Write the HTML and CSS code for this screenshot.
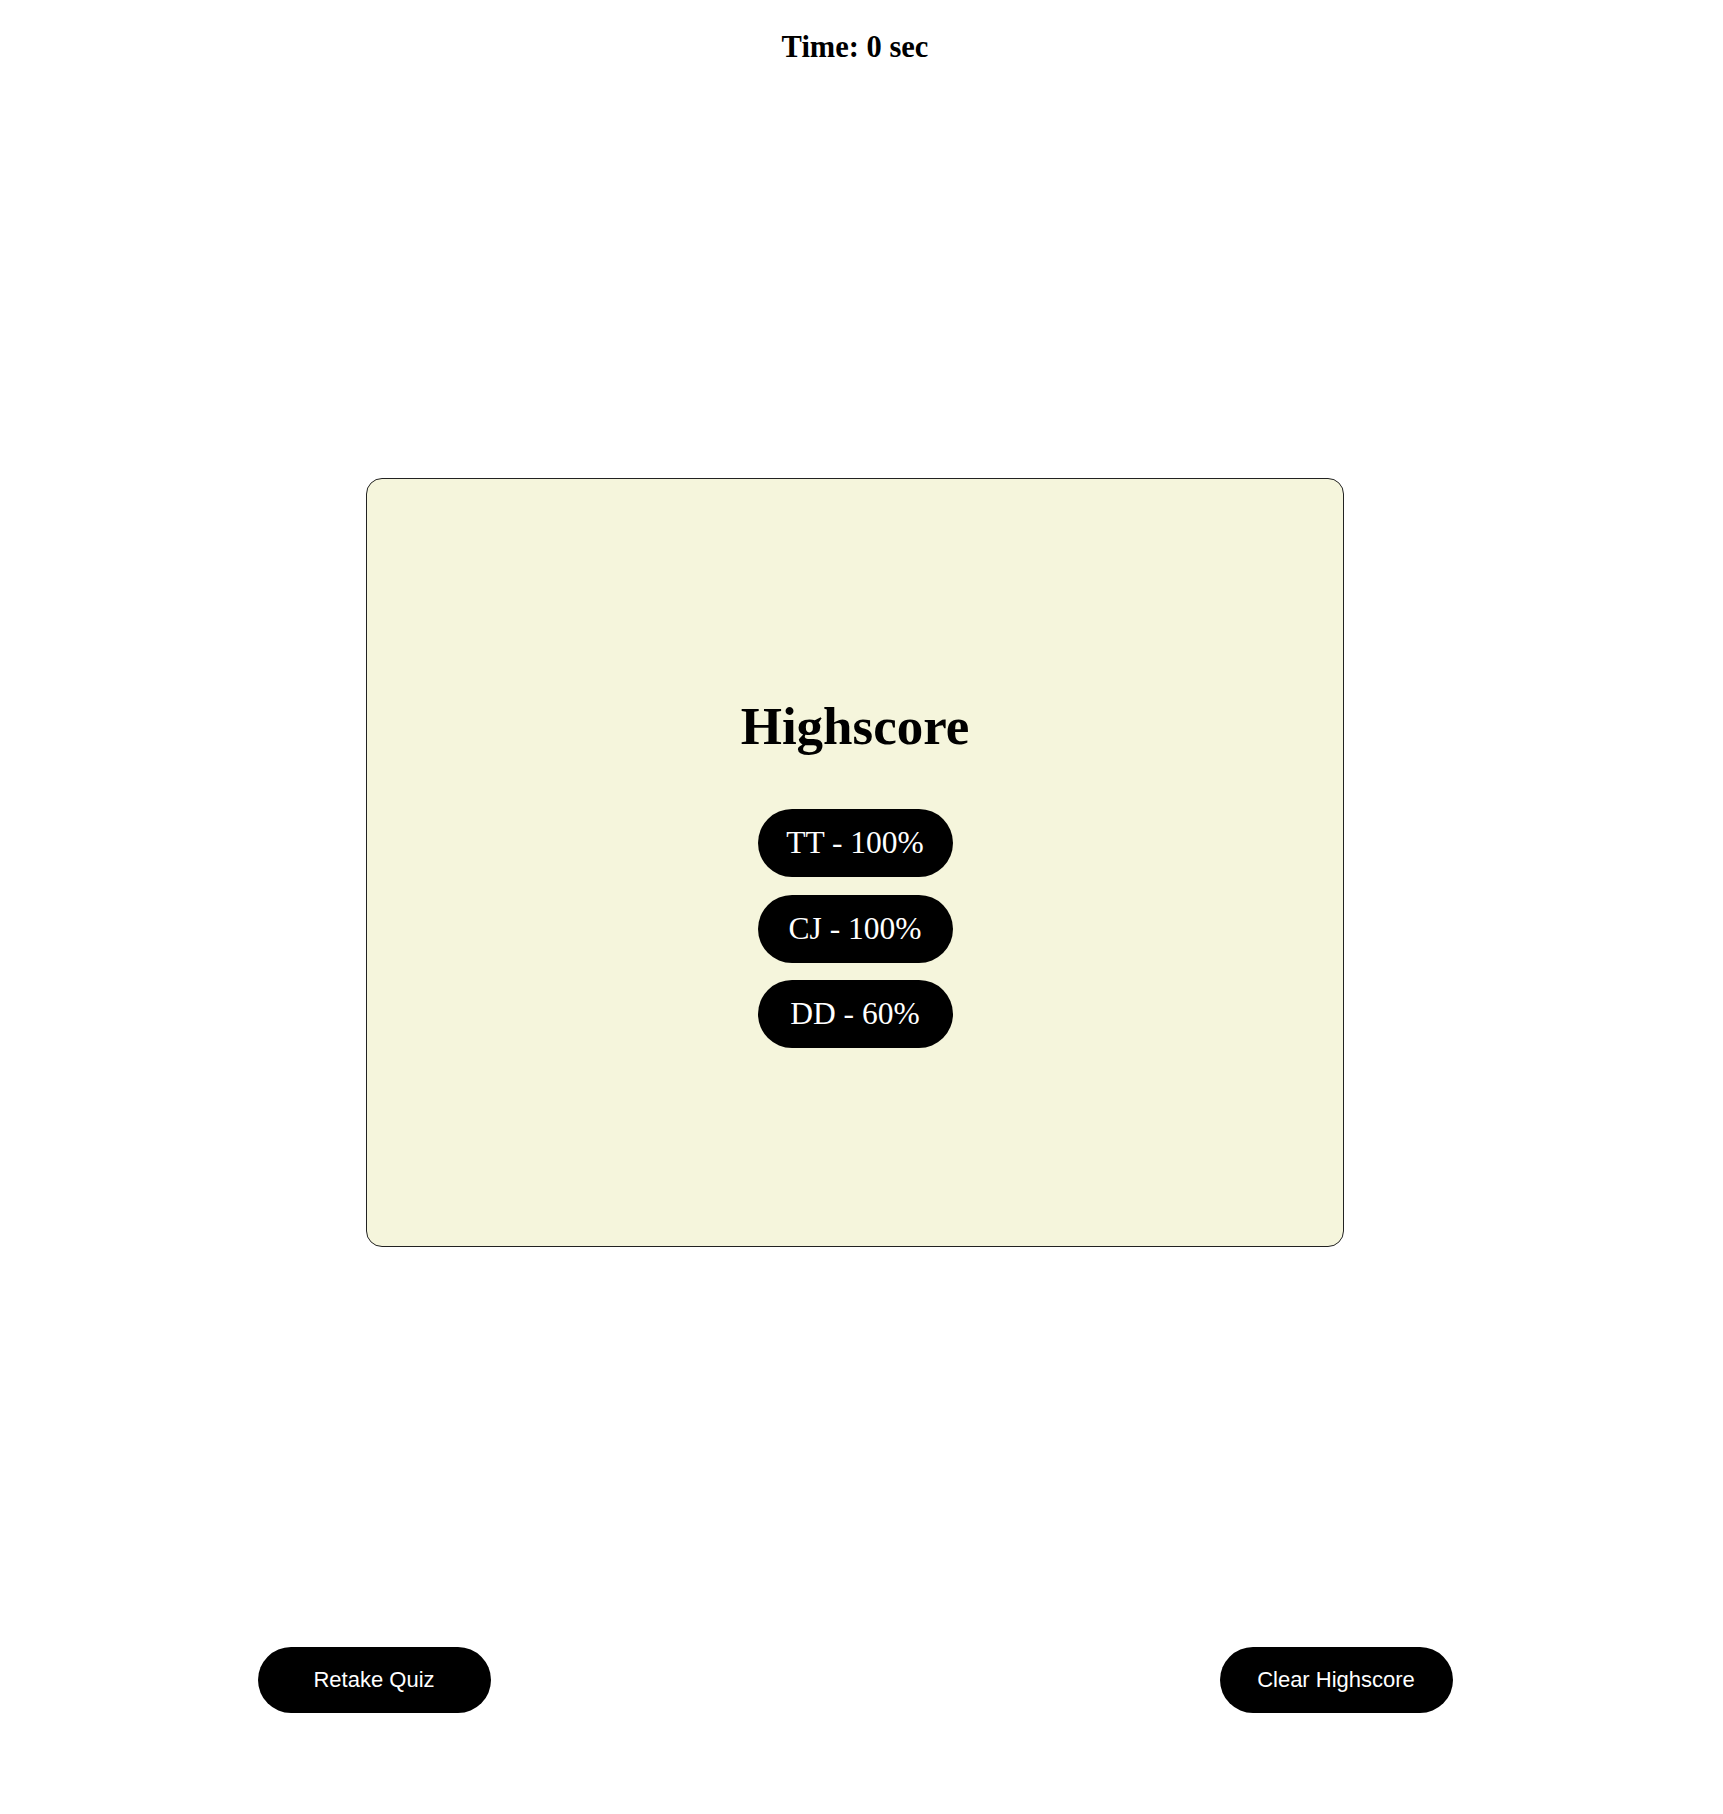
FILE: index.html
```html
<!DOCTYPE html>
<html lang="en">
<head>
<meta charset="utf-8">
<title>Highscore</title>
<link rel="stylesheet" href="styles.css">
</head>
<body>
<div class="page">
  <header class="timer">Time: 0 sec</header>
  <main class="card">
    <h1 class="card-title">Highscore</h1>
    <ul class="scores">
      <li class="score">TT - 100%</li>
      <li class="score">CJ - 100%</li>
      <li class="score">DD - 60%</li>
    </ul>
  </main>
  <div class="actions">
    <button class="btn">Retake Quiz</button>
    <button class="btn">Clear Highscore</button>
  </div>
</div>
</body>
</html>
```
FILE: styles.css
```css
html, body {
  margin: 0;
  padding: 0;
  background: #ffffff;
}

.page {
  width: 1710px;
  display: flex;
  flex-direction: column;
  align-items: center;
  font-family: "Liberation Serif", "Times New Roman", serif;
  color: #000;
}

.timer {
  padding-top: 30px;
  font-size: 30.5px;
  font-weight: bold;
  line-height: 34px;
  text-align: center;
}

.card {
  box-sizing: border-box;
  margin-top: 414px;
  width: 978px;
  height: 769px;
  background: #f5f5dc;
  border: 1px solid #222;
  border-radius: 16px;
  padding-top: 217px;
  display: flex;
  flex-direction: column;
  align-items: center;
}

.card-title {
  margin: 0;
  font-size: 53px;
  line-height: 60px;
  font-weight: bold;
}

.scores {
  list-style: none;
  margin: 53px 0 0;
  padding: 0;
  display: flex;
  flex-direction: column;
  align-items: center;
  gap: 17.5px;
}

.score {
  box-sizing: border-box;
  width: 195px;
  height: 68px;
  border-radius: 34px;
  background: #000;
  color: #fff;
  font-size: 31.5px;
  display: flex;
  align-items: center;
  justify-content: center;
}

.actions {
  margin-top: 400px;
  display: flex;
  gap: 729px;
}

.btn {
  box-sizing: border-box;
  width: 233px;
  height: 66px;
  border: none;
  border-radius: 33px;
  background: #000;
  color: #fff;
  font-family: "Liberation Sans", Arial, sans-serif;
  font-size: 22px;
  padding: 0;
  cursor: pointer;
}
```
